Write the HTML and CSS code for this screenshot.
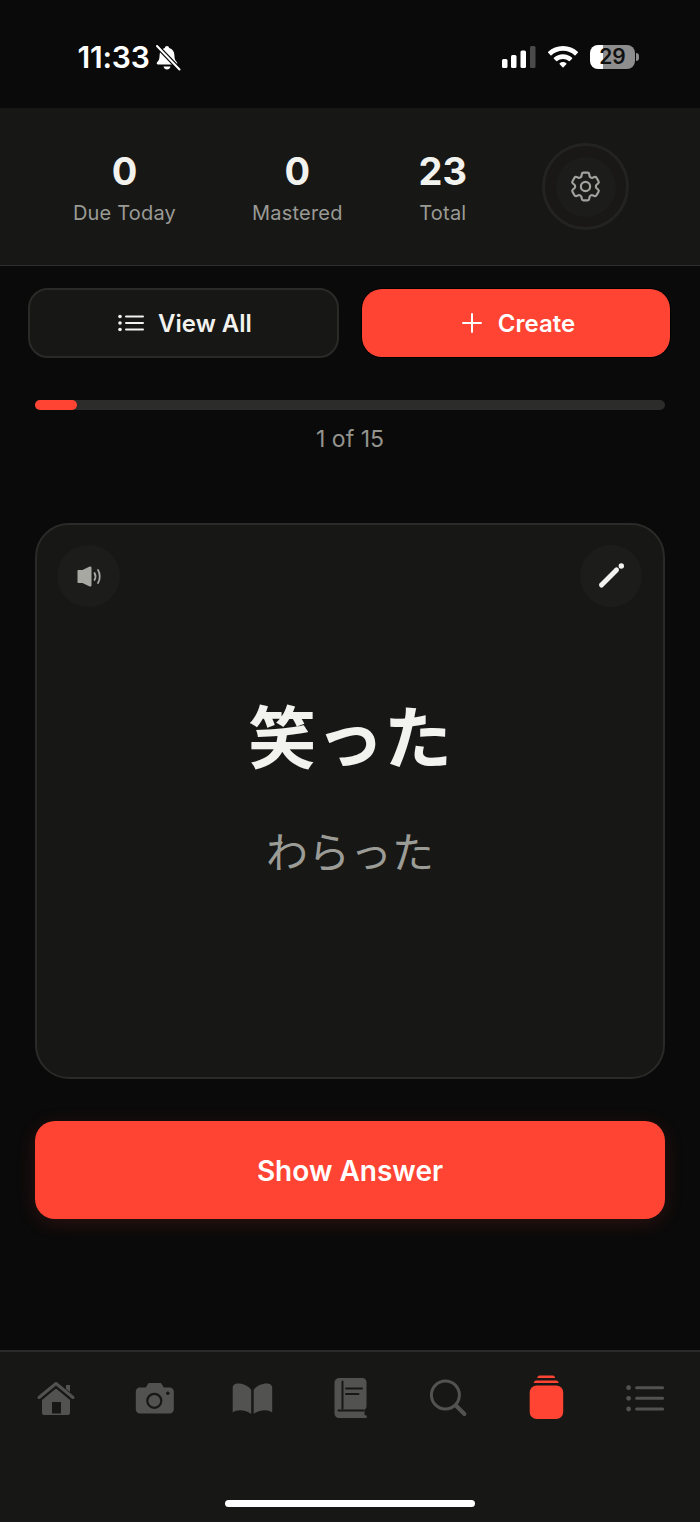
FILE: index.html
```html
<!DOCTYPE html>
<html lang="ja">
<head>
<meta charset="utf-8">
<title>Flashcards</title>
<link rel="stylesheet" href="styles.css">
</head>
<body>
<div class="screen">
  <header class="status">
    <span class="time">11:33</span>
    <svg class="bell" viewBox="155 43 27 29">
      <path fill="#fff" d="M168 46c-1.2 0-2 .8-2.2 2-3.4 1-5.2 3.8-5.2 7.2 0 4-1 5.400-2.500 7-.8.900-.3 2.300 1 2.300h17.800c1.300 0 1.800-1.400 1-2.300-1.500-1.600-2.500-3-2.500-7 0-3.400-1.800-6.200-5.200-7.200-.2-1.200-1-2-2.200-2z"/>
      <path fill="#fff" d="M164.500 66.500h7c-.4 1.900-1.800 3-3.500 3s-3.100-1.100-3.500-3z"/>
      <path stroke="#0a0a0a" stroke-width="4.500" d="M157 45l24 25"/>
      <path stroke="#fff" stroke-width="2" stroke-linecap="round" d="M158 46l22.500 23.500"/>
    </svg>
    <div class="status-right">
      <svg class="signal" viewBox="502 46 34 22">
        <rect x="502" y="59" width="5.500" height="9" rx="1.500" fill="#fff"/>
        <rect x="511" y="55" width="5.500" height="13" rx="1.500" fill="#fff"/>
        <rect x="520.500" y="50.500" width="5.500" height="17.500" rx="1.500" fill="#fff"/>
        <rect x="530" y="46" width="5.500" height="22" rx="1.500" fill="#4a4a4a"/>
      </svg>
      <svg class="wifi" viewBox="548 46 30 22">
        <path fill="#fff" d="M563 46c5.800 0 10.900 2.200 14.800 5.800.3.300.3.700 0 1l-2.300 2.400c-.3.300-.7.300-1 0-3-2.700-7-4.400-11.500-4.400s-8.500 1.700-11.500 4.400c-.3.300-.7.300-1 0l-2.300-2.400c-.3-.3-.3-.7 0-1C552.100 48.200 557.200 46 563 46z"/>
        <path fill="#fff" d="M563 54.200c3.500 0 6.700 1.300 9.100 3.500.3.300.3.700 0 1l-2.300 2.400c-.3.300-.7.300-1 0-1.500-1.300-3.600-2.200-5.800-2.200s-4.300.9-5.800 2.200c-.3.300-.7.300-1 0l-2.300-2.400c-.3-.3-.3-.7 0-1 2.400-2.200 5.600-3.500 9.100-3.500z"/>
        <path fill="#fff" d="M563 62c1.300 0 2.400.4 3.300 1.200.3.300.3.700 0 1l-2.800 3.100c-.3.300-.7.300-1 0l-2.800-3.100c-.3-.3-.3-.7 0-1 .9-.8 2-1.200 3.300-1.200z"/>
      </svg>
      <div class="battery"><span class="battery-level">29</span><span class="battery-nub"></span></div>
    </div>
  </header>

  <section class="stats">
    <div class="stat"><span class="stat-num">0</span><span class="stat-label">Due Today</span></div>
    <div class="stat"><span class="stat-num">0</span><span class="stat-label">Mastered</span></div>
    <div class="stat"><span class="stat-num">23</span><span class="stat-label">Total</span></div>
    <div class="gear-ring">
      <div class="gear-inner">
        <svg class="gear" viewBox="0 0 24 24" fill="none" stroke="#a3a39e" stroke-width="1.400" stroke-linejoin="round">
          <path d="M9.594 3.940c.09-.542.56-.94 1.110-.94h2.593c.55 0 1.020.398 1.110.94l.213 1.281c.063.374.313.686.645.870.074.040.147.083.220.127.325.196.720.257 1.075.124l1.217-.456a1.125 1.125 0 0 1 1.370.490l1.296 2.247a1.125 1.125 0 0 1-.26 1.431l-1.003.827c-.293.241-.438.613-.43.992a7.723 7.723 0 0 1 0 .255c-.008.378.137.750.43.991l1.004.827c.424.350.534.955.260 1.430l-1.298 2.247a1.125 1.125 0 0 1-1.369.491l-1.217-.456c-.355-.133-.75-.072-1.076.124a6.470 6.470 0 0 1-.22.128c-.331.183-.581.495-.644.869l-.213 1.281c-.09.543-.56.94-1.110.94h-2.594c-.55 0-1.019-.398-1.110-.94l-.213-1.281c-.062-.374-.312-.686-.644-.870a6.520 6.520 0 0 1-.22-.127c-.325-.196-.72-.257-1.076-.124l-1.217.456a1.125 1.125 0 0 1-1.369-.49l-1.297-2.247a1.125 1.125 0 0 1 .26-1.431l1.004-.827c.292-.24.437-.613.43-.991a6.932 6.932 0 0 1 0-.255c.007-.38-.138-.751-.43-.992l-1.004-.827a1.125 1.125 0 0 1-.26-1.430l1.297-2.247a1.125 1.125 0 0 1 1.370-.491l1.216.456c.356.133.751.072 1.076-.124.072-.044.146-.086.22-.128.332-.183.582-.495.644-.869l.214-1.280z"/>
          <circle cx="12" cy="12" r="3"/>
        </svg>
      </div>
    </div>
  </section>

  <div class="actions">
    <button class="btn btn-dark">
      <svg class="btn-icon" viewBox="0 0 26 18" fill="none" stroke="#f2f2ef" stroke-linecap="round">
        <path stroke-width="2" d="M8 2.500h17M8 9h17M8 15.500h17"/>
        <circle cx="2" cy="2.500" r="1.800" fill="#f2f2ef" stroke="none"/>
        <circle cx="2" cy="9" r="1.800" fill="#f2f2ef" stroke="none"/>
        <circle cx="2" cy="15.500" r="1.800" fill="#f2f2ef" stroke="none"/>
      </svg>
      <span>View All</span>
    </button>
    <button class="btn btn-red">
      <svg class="btn-icon-plus" viewBox="0 0 20 20" fill="none" stroke="#fff" stroke-width="2" stroke-linecap="round"><path d="M10 1v18M1 10h18"/></svg>
      <span>Create</span>
    </button>
  </div>

  <main class="study">
    <div class="progress"><div class="progress-fill"></div></div>
    <p class="progress-label">1 of 15</p>

    <article class="card">
      <button class="round-btn round-left">
        <svg class="round-icon" viewBox="73.500 561.500 30 28">
          <path fill="#a8a8a3" d="M77 570.500c0-.6.4-1 1-1h4l7.200-3.400c.9-.4 1.800.2 1.800 1.100v17.600c0 .9-.9 1.500-1.800 1.100l-7.200-3.400h-4c-.6 0-1-.4-1-1z"/>
          <path fill="none" stroke="#a8a8a3" stroke-width="1.800" stroke-linecap="round" d="M94 572.500c1.200 2.200 1.200 5 0 7M97.500 569.500c2.300 3.700 2.300 9.300 0 13"/>
        </svg>
      </button>
      <button class="round-btn round-right">
        <svg class="round-icon" viewBox="596 562 30 28">
          <path fill="none" stroke="#f2f2ef" stroke-width="5" stroke-linecap="round" d="M601.500 585l15-15"/>
          <circle cx="621.300" cy="566" r="2.700" fill="#f2f2ef"/>
        </svg>
      </button>
      <h1 class="word">笑った</h1>
      <p class="reading">わらった</p>
    </article>

    <button class="show-answer">Show Answer</button>
  </main>

  <nav class="tabs">
    <div class="tab-row">
      <div class="tab"><svg class="tab-icon" viewBox="34 1375 44 46">
        <path fill="none" stroke="#525250" stroke-width="3" stroke-linecap="round" stroke-linejoin="round" d="M39 1397.500l17-14 17 14"/>
        <path fill="#525250" d="M66 1385h4v7l-4-3z"/>
        <path fill="#525250" fill-rule="evenodd" d="M56 1388.500l14 11.500v13c0 1.200-.8 2-2 2h-24c-1.200 0-2-.8-2-2v-13zM52 1402v11.500h9V1402z"/>
      </svg></div>
      <div class="tab"><svg class="tab-icon" viewBox="132.200 1375 44 46">
        <path fill="#525250" d="M140 1387.500h6l2-3.300c.4-.7 1-1.200 2-1.200h10c1 0 1.600.5 2 1.200l2 3.300h6c2.200 0 4 1.800 4 4v18c0 2.200-1.800 4-4 4h-30c-2.200 0-4-1.800-4-4v-18c0-2.200 1.800-4 4-4z"/>
        <circle cx="154.500" cy="1400.800" r="7" fill="none" stroke="#171716" stroke-width="2.200"/>
        <circle cx="168" cy="1393.300" r="1.800" fill="#171716"/>
      </svg></div>
      <div class="tab"><svg class="tab-icon" viewBox="230.300 1375 44 46">
        <path fill="#525250" d="M251.500 1390c-2.500-4-8-6.500-13-6.500-3 0-5.500 1.500-5.500 4v25c2-1.600 4.500-2.300 7-2.300 4.500 0 8.800 1.300 11.500 3.800z"/>
        <path fill="#525250" d="M254 1390c2.500-4 8-6.500 13-6.500 3 0 5.500 1.500 5.500 4v25c-2-1.600-4.500-2.300-7-2.300-4.500 0-8.800 1.300-11.500 3.800z"/>
      </svg></div>
      <div class="tab"><svg class="tab-icon" viewBox="328.500 1375 44 46">
        <path fill="#525250" d="M340 1378h23c2.300 0 4 1.700 4 4v24.500c0 1.500-.8 2.500-2 3.200v5.300l2 .5c.6.200.6 2.500-.5 2.500H340c-3 0-5-2-5-5v-30.500c0-2.500 2.500-4.500 5-4.500z"/>
        <path fill="none" stroke="#171716" stroke-width="2" stroke-linecap="round" d="M343 1381.500v27M346.500 1388.500h16M346.500 1394h12.500"/>
        <path fill="none" stroke="#171716" stroke-width="2" stroke-linecap="round" d="M339 1410.500h25"/>
      </svg></div>
      <div class="tab"><svg class="tab-icon" viewBox="426.600 1375 44 46">
        <circle cx="445" cy="1395" r="14" fill="none" stroke="#525250" stroke-width="3"/>
        <path fill="none" stroke="#525250" stroke-width="4" stroke-linecap="round" d="M455.500 1405.500l8.500 8.500"/>
      </svg></div>
      <div class="tab"><svg class="tab-icon" viewBox="524.800 1375 44 46">
        <path fill="#ff4433" d="M537 1378c.3-1.500 1-2.500 2.500-2.500h13c1.500 0 2.200 1 2.500 2.500z"/>
        <path fill="#ff4433" d="M533.500 1383c.3-1.500 1-2.500 2.500-2.500h20c1.500 0 2.200 1 2.500 2.500z"/>
        <rect x="529.500" y="1385.500" width="33.500" height="33.500" rx="7" fill="#ff4433"/>
      </svg></div>
      <div class="tab"><svg class="tab-icon" viewBox="622.900 1375 44 46">
        <circle cx="628.500" cy="1387.700" r="2.400" fill="#525250"/>
        <circle cx="628.500" cy="1398.300" r="2.400" fill="#525250"/>
        <circle cx="628.500" cy="1409" r="2.400" fill="#525250"/>
        <path fill="none" stroke="#525250" stroke-width="3" stroke-linecap="round" d="M636.500 1387.700h26M636.500 1398.300h26M636.500 1409h26"/>
      </svg></div>
    </div>
    <div class="home-indicator"></div>
  </nav>
</div>
</body>
</html>
```

FILE: styles.css
```css
* { box-sizing: border-box; }
html, body { margin: 0; padding: 0; background: #0a0a0a; }
body { font-family: Inter, "Noto Sans CJK JP", sans-serif; color: #f2f2ef; }
.screen { width: 700px; height: 1522px; display: flex; flex-direction: column; overflow: hidden; background: #0a0a0a; }

.status { height: 108px; flex: none; display: flex; align-items: center; padding: 6px 61px 0 77.500px; color: #fff; }
.time { font-size: 30px; font-weight: 600; line-height: 1; letter-spacing: -0.2px; }
.bell { width: 27px; height: 29px; margin-left: 4px; }
.status-right { margin-left: auto; display: flex; align-items: center; }
.signal { width: 34px; height: 22px; }
.wifi { width: 30px; height: 22px; margin-left: 12px; }
.battery { display: flex; align-items: center; margin-left: 12px; }
.battery-level { width: 45px; height: 24px; border-radius: 8px; background: linear-gradient(to right, #fff 0, #fff 13px, #8e8e8e 13px); color: #111; font-size: 21px; font-weight: 600; line-height: 24px; text-align: center; }
.battery-nub { width: 3px; height: 8px; border-radius: 0 3px 3px 0; background: #8e8e8e; margin-left: 1px; }

.stats { height: 158px; flex: none; display: flex; align-items: center; justify-content: center; gap: 76px; background: #171716; border-bottom: 1px solid #2e2e2c; padding-left: 2px; }
.stat { display: flex; flex-direction: column; align-items: center; gap: 6px; margin-top: 1px; }
.stat-num { font-size: 38px; font-weight: 700; line-height: 46px; color: #f2f2ef; }
.stat-label { font-size: 20px; line-height: 26px; letter-spacing: 0.2px; color: #9a9a95; }
.gear-ring { width: 87px; height: 87px; margin-left: -1px; border-radius: 50%; border: 3px solid #232321; background: #1a1816; display: flex; align-items: center; justify-content: center; }
.gear-inner { width: 60px; height: 60px; border-radius: 50%; background: #1c1c1b; display: flex; align-items: center; justify-content: center; }
.gear { width: 37px; height: 37px; }

.actions { flex: none; display: grid; grid-template-columns: 311fr 308fr; gap: 23px; padding: 22px 30px 0 28px; }
.btn { border-radius: 20px; display: flex; align-items: center; justify-content: center; gap: 14px; font-family: inherit; font-size: 24px; font-weight: 600; }
.btn-dark { height: 70px; background: #171716; border: 2px solid #2a2a28; color: #f2f2ef; padding: 0 0 0 3px; }
.btn-red { height: 68px; align-self: center; background: #ff4433; border: none; box-shadow: 0 0 0 1px #000; color: #fff; gap: 16px; padding: 0 0 0 5px; }
.btn-icon { width: 26px; height: 18px; }
.btn-icon-plus { width: 20px; height: 20px; }

.study { flex: 1; display: flex; flex-direction: column; padding: 42px 35px 0; }
.progress { height: 10px; border-radius: 5px; background: #2c2c2a; flex: none; }
.progress-fill { width: 42px; height: 10px; border-radius: 5px; background: #ff4433; }
.progress-label { margin: 16px 0 0; text-align: center; font-size: 23px; line-height: 27px; color: #94948f; }

.card { margin-top: 70px; position: relative; height: 556px; border-radius: 34px; background: #171716; border: 2px solid #2a2a28; display: flex; flex-direction: column; align-items: center; justify-content: center; padding-bottom: 33px; flex: none; }
.round-btn { position: absolute; top: 20px; width: 63px; height: 62px; padding: 0; border: none; border-radius: 50%; background: #1c1c1b; display: flex; align-items: center; justify-content: center; }
.round-left { left: 20px; }
.round-right { right: 21px; width: 62px; }
.round-icon { width: 30px; height: 28px; }
.word { margin: 0; font-family: "Noto Sans CJK JP", sans-serif; font-size: 68px; font-weight: 700; line-height: 80px; color: #f2f2ef; }
.reading { margin: 51px 0 0; font-family: "Noto Sans CJK JP", sans-serif; font-size: 42px; font-weight: 400; line-height: 50px; color: #9c9c97; }

.show-answer { margin-top: 42px; height: 98px; flex: none; border: none; border-radius: 20px; background: #ff4433; color: #fff; font-family: inherit; font-size: 28px; font-weight: 600; padding: 1px 0 0; box-shadow: 0 4px 20px rgba(255, 68, 51, 0.14); }

.tabs { height: 172px; flex: none; display: flex; flex-direction: column; align-items: center; background: #171716; border-top: 2px solid #2a2a28; }
.tab-row { width: 100%; display: flex; padding: 23px 6px 0 7px; }
.tab { flex: 1; display: flex; justify-content: center; }
.tab-icon { width: 44px; height: 46px; overflow: visible; }
.home-indicator { width: 250px; height: 7px; border-radius: 4px; background: #fff; margin-top: auto; margin-bottom: 15px; }
```
